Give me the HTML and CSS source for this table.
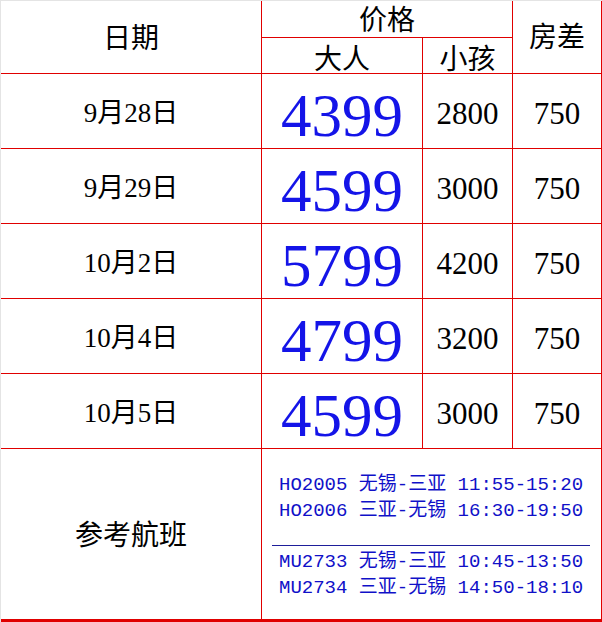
FILE: index.html
```html
<!DOCTYPE html>
<html lang="zh-CN">
<head>
<meta charset="utf-8">
<title>价格表</title>
<link rel="stylesheet" href="styles.css">
</head>
<body>
<div class="sheet">
  <div class="cell head date-h">日期</div>
  <div class="cell head price-h">价格</div>
  <div class="cell head room-h">房差</div>
  <div class="cell head sub">大人</div>
  <div class="cell head sub">小孩</div>

  <div class="cell date">9月28日</div>
  <div class="cell adult">4399</div>
  <div class="cell num">2800</div>
  <div class="cell num">750</div>

  <div class="cell date">9月29日</div>
  <div class="cell adult">4599</div>
  <div class="cell num">3000</div>
  <div class="cell num">750</div>

  <div class="cell date">10月2日</div>
  <div class="cell adult">5799</div>
  <div class="cell num">4200</div>
  <div class="cell num">750</div>

  <div class="cell date">10月4日</div>
  <div class="cell adult">4799</div>
  <div class="cell num">3200</div>
  <div class="cell num">750</div>

  <div class="cell date">10月5日</div>
  <div class="cell adult">4599</div>
  <div class="cell num">3000</div>
  <div class="cell num">750</div>

  <div class="cell label last">参考航班</div>
  <div class="cell flights last">
    <div class="group">
      <div class="flight">HO2005 无锡-三亚 11:55-15:20</div>
      <div class="flight">HO2006 三亚-无锡 16:30-19:50</div>
    </div>
    <div class="sep"></div>
    <div class="group second">
      <div class="flight">MU2733 无锡-三亚 10:45-13:50</div>
      <div class="flight">MU2734 三亚-无锡 14:50-18:10</div>
    </div>
  </div>
</div>
</body>
</html>
```

FILE: styles.css
```css
* { box-sizing: border-box; }

html, body {
  margin: 0;
  padding: 0;
  background: #ffffff;
}

body {
  width: 602px;
  height: 622px;
  overflow: hidden;
  font-family: "Liberation Serif", "Noto Sans CJK SC", serif;
  color: #000000;
}

.sheet {
  display: grid;
  grid-template-columns: 261px 161px 90px 89px;
  grid-template-rows: 37px 36px repeat(5, 75px) 173px;
  border-left: 1px solid #e4e4e4;
  border-top: 1px solid #e4e4e4;
  width: 602px;
  height: 622px;
}

.cell {
  border-right: 1px solid #e00000;
  border-bottom: 1px solid #e00000;
  display: flex;
  align-items: center;
  justify-content: center;
  line-height: 1;
  white-space: nowrap;
}

.cell.last {
  border-bottom: 3px solid #e00000;
}

.head {
  font-size: 28px;
}

.date-h {
  grid-row: span 2;
  padding-top: 4px;
}

.price-h {
  grid-column: span 2;
  padding-top: 4px;
}

.room-h {
  grid-row: span 2;
  padding-top: 1px;
}

.sub {
  padding-top: 9px;
}

.date {
  font-size: 27px;
  padding-top: 4px;
}

.adult {
  font-size: 61px;
  color: #1414e8;
  padding-top: 9px;
}

.num {
  font-size: 31px;
  padding-top: 4px;
}

.label {
  font-size: 28px;
  padding-top: 4px;
}

.flights {
  grid-column: span 3;
  flex-direction: column;
  align-items: stretch;
  justify-content: flex-start;
  padding: 23px 11px 0 10px;
  font-family: "Liberation Mono", "Noto Sans CJK SC", monospace;
  font-size: 19px;
  color: #1010c8;
}

.group {
  padding-left: 7px;
}

.flight {
  height: 26px;
  line-height: 26px;
  white-space: pre;
}

.sep {
  height: 1px;
  background: #1e1e9a;
  margin-top: 21px;
}

.group.second {
  margin-top: 3px;
}
```
